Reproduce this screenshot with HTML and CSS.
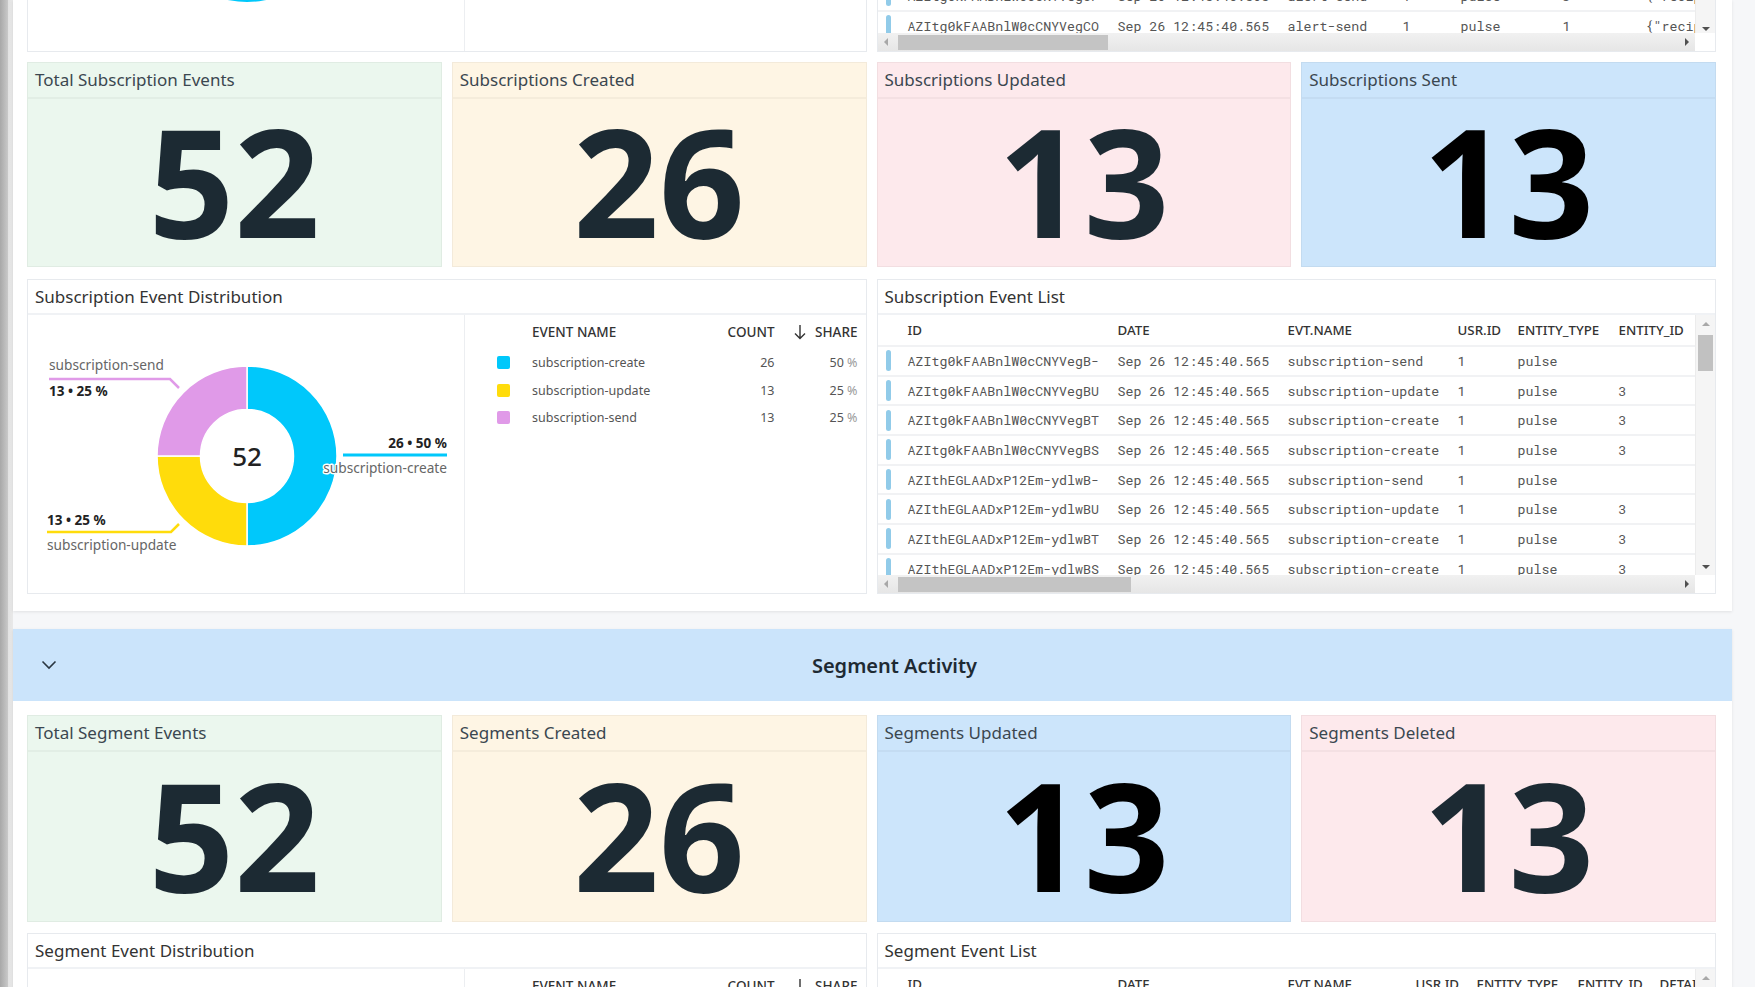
FILE: index.html
```html
<!DOCTYPE html>
<html lang="en">
<head>
<meta charset="utf-8">
<title>Activity Dashboard</title>
<link rel="stylesheet" href="styles.css">
</head>
<body>
<div class="screen">
  <div class="edge"></div>
  <div class="main">

    <section class="panel panel-top">
      <div class="row2 tail">
        <div class="card dist tail-card">
          <div class="dist-body tail-dist">
            <div class="dist-left">
              <svg class="tail-arc" width="437" height="51" viewBox="0 0 437 51"><circle cx="219" cy="-88" r="90" fill="#00c8fb"/></svg>
            </div>
            <div class="dist-right"></div>
          </div>
        </div>
        <div class="card list tail-card">
          <div class="list-body tail-body">
            <div class="view">
              <div class="tail-rows">
                <div class="trow cols-alert"><span class="ind"></span><span>AZItg0kFAABnlW0cCNYVegCP</span><span>Sep 26 12:45:40.565</span><span>alert-send</span><span>1</span><span>pulse</span><span>3</span><span>{"recipients":["pulse"]}</span></div>
                <div class="trow cols-alert"><span class="ind"></span><span>AZItg0kFAABnlW0cCNYVegCO</span><span>Sep 26 12:45:40.565</span><span>alert-send</span><span>1</span><span>pulse</span><span>1</span><span>{"recipients":["pulse"]}</span></div>
              </div>
            </div>
            <div class="vscroll"><span class="arr"></span><span class="vtrack"></span><span class="arr"><i class="tri down"></i></span></div>
            <div class="hscroll"><span class="harr"><i class="tri left"></i></span><span class="htrack"><i class="hthumb tail-thumb"></i></span><span class="harr"><i class="tri right"></i></span></div>
            <div class="corner"></div>
          </div>
        </div>
      </div>

      <div class="kpis">
        <div class="card kpi green"><div class="kpi-title">Total Subscription Events</div><div class="kpi-value">52</div></div>
        <div class="card kpi yellow"><div class="kpi-title">Subscriptions Created</div><div class="kpi-value">26</div></div>
        <div class="card kpi pink"><div class="kpi-title">Subscriptions Updated</div><div class="kpi-value">13</div></div>
        <div class="card kpi blue"><div class="kpi-title">Subscriptions Sent</div><div class="kpi-value">13</div></div>
      </div>

      <div class="row2 dist-row">
        <div class="card dist">
          <div class="card-title">Subscription Event Distribution</div>
          <div class="dist-body">
            <div class="dist-left">
              <svg class="donut" width="437" height="278" viewBox="0 0 437 278">
                <path d="M219,51 A90,90 0 0 1 219,231 L219,187.5 A46.5,46.5 0 0 0 219,94.5 Z" fill="#00c8fb" stroke="#fff" stroke-width="1.5"/>
                <path d="M219,231 A90,90 0 0 1 129,141 L172.5,141 A46.5,46.5 0 0 0 219,187.5 Z" fill="#ffdc0b" stroke="#fff" stroke-width="1.5"/>
                <path d="M129,141 A90,90 0 0 1 219,51 L219,94.5 A46.5,46.5 0 0 0 172.5,141 Z" fill="#e09ae8" stroke="#fff" stroke-width="1.5"/>
                <text class="d-center" x="219" y="150.5" text-anchor="middle">52</text>
                <text class="d-name" x="21" y="55">subscription-send</text>
                <polyline points="21,64 142,64 151,73" fill="none" stroke="#e09ae8" stroke-width="2.5"/>
                <text class="d-val" x="21" y="81">13 • 25 %</text>
                <text class="d-val" x="419" y="133" text-anchor="end">26 • 50 %</text>
                <line x1="315" y1="140" x2="419" y2="140" stroke="#00c8fb" stroke-width="3"/>
                <text class="d-name halo" x="419" y="158" text-anchor="end">subscription-create</text>
                <text class="d-val" x="19" y="210">13 • 25 %</text>
                <polyline points="19,217 143,217 151,209" fill="none" stroke="#ffdc0b" stroke-width="2.5"/>
                <text class="d-name" x="19" y="235">subscription-update</text>
              </svg>
            </div>
            <div class="dist-right">
              <div class="lg-row lg-head"><span></span><span>EVENT NAME</span><span class="num">COUNT</span><span class="num share-h"><svg width="12" height="16" viewBox="0 0 12 16"><path d="M6 1 V14.5 M1 9.5 L6 14.5 L11 9.5" fill="none" stroke="#333" stroke-width="1.4"/></svg>SHARE</span></div>
              <div class="lg-row"><span class="sw c-cyan"></span><span>subscription-create</span><span class="num">26</span><span class="num">50 <span class="pct">%</span></span></div>
              <div class="lg-row"><span class="sw c-yellow"></span><span>subscription-update</span><span class="num">13</span><span class="num">25 <span class="pct">%</span></span></div>
              <div class="lg-row"><span class="sw c-pink"></span><span>subscription-send</span><span class="num">13</span><span class="num">25 <span class="pct">%</span></span></div>
            </div>
          </div>
        </div>

        <div class="card list">
          <div class="card-title">Subscription Event List</div>
          <div class="list-body">
            <div class="view">
              <div class="trow thead cols-sub"><span></span><span>ID</span><span>DATE</span><span>EVT.NAME</span><span>USR.ID</span><span>ENTITY_TYPE</span><span>ENTITY_ID</span><span>DETAILS</span></div>
              <div class="trow cols-sub"><span class="ind"></span><span>AZItg0kFAABnlW0cCNYVegB-</span><span>Sep 26 12:45:40.565</span><span>subscription-send</span><span>1</span><span>pulse</span><span></span><span>{"subscription_id":3}</span></div>
              <div class="trow cols-sub"><span class="ind"></span><span>AZItg0kFAABnlW0cCNYVegBU</span><span>Sep 26 12:45:40.565</span><span>subscription-update</span><span>1</span><span>pulse</span><span>3</span><span>{"subscription_id":3}</span></div>
              <div class="trow cols-sub"><span class="ind"></span><span>AZItg0kFAABnlW0cCNYVegBT</span><span>Sep 26 12:45:40.565</span><span>subscription-create</span><span>1</span><span>pulse</span><span>3</span><span>{"subscription_id":3}</span></div>
              <div class="trow cols-sub"><span class="ind"></span><span>AZItg0kFAABnlW0cCNYVegBS</span><span>Sep 26 12:45:40.565</span><span>subscription-create</span><span>1</span><span>pulse</span><span>3</span><span>{"subscription_id":3}</span></div>
              <div class="trow cols-sub"><span class="ind"></span><span>AZIthEGLAADxP12Em-ydlwB-</span><span>Sep 26 12:45:40.565</span><span>subscription-send</span><span>1</span><span>pulse</span><span></span><span>{"subscription_id":3}</span></div>
              <div class="trow cols-sub"><span class="ind"></span><span>AZIthEGLAADxP12Em-ydlwBU</span><span>Sep 26 12:45:40.565</span><span>subscription-update</span><span>1</span><span>pulse</span><span>3</span><span>{"subscription_id":3}</span></div>
              <div class="trow cols-sub"><span class="ind"></span><span>AZIthEGLAADxP12Em-ydlwBT</span><span>Sep 26 12:45:40.565</span><span>subscription-create</span><span>1</span><span>pulse</span><span>3</span><span>{"subscription_id":3}</span></div>
              <div class="trow cols-sub"><span class="ind"></span><span>AZIthEGLAADxP12Em-ydlwBS</span><span>Sep 26 12:45:40.565</span><span>subscription-create</span><span>1</span><span>pulse</span><span>3</span><span>{"subscription_id":3}</span></div>
            </div>
            <div class="vscroll"><span class="arr"><i class="tri up"></i></span><span class="vtrack"><i class="vthumb"></i></span><span class="arr"><i class="tri down"></i></span></div>
            <div class="hscroll"><span class="harr"><i class="tri left"></i></span><span class="htrack"><i class="hthumb"></i></span><span class="harr"><i class="tri right"></i></span></div>
            <div class="corner"></div>
          </div>
        </div>
      </div>
    </section>

    <section class="panel panel-seg">
      <header class="sec-head">
        <span class="chev"><svg width="16" height="10" viewBox="0 0 16 10"><path d="M1.5 1.5 L8 8 L14.5 1.5" fill="none" stroke="#2b3640" stroke-width="1.6"/></svg></span>
        <h2>Segment Activity</h2>
      </header>
      <div class="panel-body">
        <div class="kpis">
          <div class="card kpi green"><div class="kpi-title">Total Segment Events</div><div class="kpi-value">52</div></div>
          <div class="card kpi yellow"><div class="kpi-title">Segments Created</div><div class="kpi-value">26</div></div>
          <div class="card kpi blue"><div class="kpi-title">Segments Updated</div><div class="kpi-value">13</div></div>
          <div class="card kpi pink"><div class="kpi-title">Segments Deleted</div><div class="kpi-value">13</div></div>
        </div>

        <div class="row2 dist-row">
          <div class="card dist">
            <div class="card-title">Segment Event Distribution</div>
            <div class="dist-body">
              <div class="dist-left"></div>
              <div class="dist-right">
                <div class="lg-row lg-head"><span></span><span>EVENT NAME</span><span class="num">COUNT</span><span class="num share-h"><svg width="12" height="16" viewBox="0 0 12 16"><path d="M6 1 V14.5 M1 9.5 L6 14.5 L11 9.5" fill="none" stroke="#333" stroke-width="1.4"/></svg>SHARE</span></div>
                <div class="lg-row"><span class="sw c-cyan"></span><span>segment-create</span><span class="num">26</span><span class="num">50 <span class="pct">%</span></span></div>
              </div>
            </div>
          </div>
          <div class="card list">
            <div class="card-title">Segment Event List</div>
            <div class="list-body">
              <div class="view">
                <div class="trow thead cols-seg"><span></span><span>ID</span><span>DATE</span><span>EVT.NAME</span><span>USR.ID</span><span>ENTITY_TYPE</span><span>ENTITY_ID</span><span>DETAILS</span></div>
                <div class="trow cols-seg"><span class="ind"></span><span>AZItg0kFAABnlW0cCNYVegA-</span><span>Sep 26 12:45:40.565</span><span>segment-delete</span><span>1</span><span>pulse</span><span>2</span><span>{"segment_id":2}</span></div>
              </div>
              <div class="vscroll"><span class="arr"><i class="tri up"></i></span><span class="vtrack"><i class="vthumb"></i></span><span class="arr"><i class="tri down"></i></span></div>
              <div class="hscroll"><span class="harr"><i class="tri left"></i></span><span class="htrack"><i class="hthumb"></i></span><span class="harr"><i class="tri right"></i></span></div>
              <div class="corner"></div>
            </div>
          </div>
        </div>
      </div>
    </section>

  </div>
</div>
</body>
</html>
```

FILE: styles.css
```css
html, body {
  margin: 0;
  padding: 0;
}

body {
  background: #f6f7f9;
  font-family: "Noto Sans", "Open Sans", sans-serif;
  color: #333;
  overflow: hidden;
}

.screen {
  display: flex;
  height: 987px;
  overflow: hidden;
}

.edge {
  flex: 0 0 13px;
  background: linear-gradient(90deg, #a8a8a8 0, #c9c9c9 8px, #e2e2e2 8px, #e9e9e9 13px);
}

.main {
  flex: 1;
  min-width: 0;
  display: flex;
  flex-direction: column;
  gap: 18px;
  padding-right: 23px;
}

.panel {
  flex-shrink: 0;
  background: #fff;
  box-shadow: 0 1px 3px rgba(0, 0, 0, 0.09);
}

.panel-top {
  padding: 0 16px 17px 14px;
}

.panel-seg .panel-body {
  padding: 14px 16px 0 14px;
}

.row2 {
  display: grid;
  grid-template-columns: minmax(0, 1fr) minmax(0, 1fr);
  gap: 10px;
}

.card {
  box-sizing: border-box;
  min-width: 0;
  border: 1px solid #e7eaee;
  background: #fff;
}

/* tail of the previous section */
.tail-card {
  height: 52px;
  border-top: none;
}

.tail-dist {
  height: 51px;
}

.tail-arc {
  display: block;
}

/* KPI cards */
.kpis {
  display: grid;
  grid-template-columns: repeat(4, minmax(0, 1fr));
  gap: 10px;
  margin-top: 10px;
}

.panel-seg .kpis {
  margin-top: 0;
}

.kpi {
  height: 205px;
  display: flex;
  flex-direction: column;
  border-color: rgba(0, 0, 0, 0.045);
}

.panel-seg .kpi {
  height: 207px;
}

.kpi-title {
  height: 36px;
  box-sizing: border-box;
  border-bottom: 2px solid rgba(0, 0, 0, 0.035);
  padding: 0 7px;
  font-size: 17px;
  line-height: 34px;
  color: #3b4750;
  white-space: nowrap;
}

.kpi-value {
  flex: 1;
  display: flex;
  align-items: center;
  justify-content: center;
  padding-bottom: 5px;
  font-size: 150px;
  font-weight: 700;
  line-height: 1;
  color: #1c2a33;
}

.green { background: #ebf7ee; }
.yellow { background: #fef5e4; }
.pink { background: #fde9ec; }
.blue { background: #cce5fb; }
.blue .kpi-value { color: #000; }

/* distribution card */
.panel-top .dist-row {
  margin-top: 12px;
}

.panel-seg .dist-row {
  margin-top: 11px;
}

.dist, .list {
  display: flex;
  flex-direction: column;
}

.card-title {
  height: 35px;
  box-sizing: border-box;
  border-bottom: 2px solid #f0f2f5;
  padding-left: 7px;
  font-size: 17px;
  line-height: 33px;
  color: #333;
  white-space: nowrap;
}

.dist-body {
  display: grid;
  grid-template-columns: 437px minmax(0, 1fr);
  height: 278px;
}

.dist-left {
  border-right: 1px solid #eceef1;
  overflow: hidden;
}

.donut {
  display: block;
}

.d-center {
  font-family: "Noto Sans", sans-serif;
  font-size: 26px;
  font-weight: 500;
  fill: #222;
}

.d-name {
  font-family: "Noto Sans", sans-serif;
  font-size: 13.7px;
  fill: #666;
}

.d-val {
  font-family: "Noto Sans", sans-serif;
  font-size: 13.5px;
  font-weight: 700;
  fill: #222;
}

.halo {
  paint-order: stroke;
  stroke: #fff;
  stroke-width: 3px;
  stroke-linejoin: round;
}

/* legend table */
.lg-row {
  display: grid;
  grid-template-columns: 67px minmax(0, 1fr) 60px 83px;
  align-items: center;
  height: 27.5px;
  padding-right: 8px;
  font-size: 12.5px;
  color: #555;
  white-space: nowrap;
}

.lg-head {
  height: 34px;
  font-size: 13.5px;
  font-weight: 500;
  color: #333;
}

.num {
  text-align: right;
}

.share-h {
  display: flex;
  align-items: center;
  justify-content: flex-end;
  gap: 9px;
}

.share-h svg {
  display: block;
}

.pct {
  color: #9a9a9a;
}

.sw {
  width: 13px;
  height: 13px;
  border-radius: 2px;
  margin-left: 32px;
}

.c-cyan { background: #00c8fb; }
.c-yellow { background: #ffdc0b; }
.c-pink { background: #e09ae8; }

/* event list */
.list-body {
  display: grid;
  grid-template-columns: minmax(0, 1fr) 20px;
  grid-template-rows: minmax(0, 1fr) 18px;
  height: 278px;
}

.tail-body {
  height: 51px;
  grid-template-rows: 33px 18px;
}

.view {
  overflow: hidden;
  min-width: 0;
}

.tail-rows {
  margin-top: -18px;
}

.trow {
  display: grid;
  align-items: center;
  height: 29.7px;
  box-sizing: border-box;
  border-bottom: 2px solid #f1f2f4;
  font-family: "Roboto Mono", "DejaVu Sans Mono", monospace;
  font-size: 13.3px;
  color: #555;
  white-space: nowrap;
}

.thead {
  height: 32px;
  font-family: "Noto Sans", sans-serif;
  font-weight: 500;
  font-size: 13.3px;
  color: #333;
}

.cols-sub { grid-template-columns: 30px 210px 170px 170px 60px 101px 100px 300px; }
.cols-alert { grid-template-columns: 30px 210px 170px 115px 58px 102px 83px 300px; }
.cols-seg { grid-template-columns: 30px 210px 170px 128px 61px 101px 82px 300px; }

.ind {
  width: 5px;
  height: 21px;
  border-radius: 3px;
  background: #91cbe9;
  margin-left: 8.5px;
}

/* fake scrollbars */
.vscroll {
  display: flex;
  flex-direction: column;
  background: #f5f5f5;
  border-left: 1px solid #ececec;
}

.arr {
  height: 17px;
  flex: 0 0 17px;
  display: flex;
  align-items: center;
  justify-content: center;
}

.vtrack {
  flex: 1;
  padding: 3px 2px 0 2px;
}

.vthumb {
  display: block;
  height: 36px;
  background: #c1c1c1;
}

.hscroll {
  display: flex;
  background: linear-gradient(180deg, #f1f1f1, #e6e6e6);
}

.harr {
  flex: 0 0 17px;
  display: flex;
  align-items: center;
  justify-content: center;
}

.htrack {
  flex: 1;
  padding: 2px 0 1px 3px;
}

.hthumb {
  display: block;
  width: 233px;
  height: 15px;
  background: #c4c4c4;
}

.tail-thumb {
  width: 210px;
}

.corner {
  background: #fff;
}

.tri {
  display: block;
  width: 0;
  height: 0;
}

.tri.up {
  border-left: 4px solid transparent;
  border-right: 4px solid transparent;
  border-bottom: 4px solid #a8a8a8;
}

.tri.down {
  border-left: 4px solid transparent;
  border-right: 4px solid transparent;
  border-top: 4px solid #505050;
}

.tri.left {
  border-top: 4px solid transparent;
  border-bottom: 4px solid transparent;
  border-right: 4px solid #a8a8a8;
}

.tri.right {
  border-top: 4px solid transparent;
  border-bottom: 4px solid transparent;
  border-left: 4px solid #505050;
}

/* segment section header */
.sec-head {
  height: 72px;
  display: flex;
  align-items: center;
  padding-left: 28px;
  background: #cbe4fb;
}

.chev {
  display: flex;
  width: 16px;
}

.chev svg {
  display: block;
}

.sec-head h2 {
  flex: 1;
  margin: 0;
  text-align: center;
  font-size: 20px;
  font-weight: 600;
  color: #1e2a33;
}
```
